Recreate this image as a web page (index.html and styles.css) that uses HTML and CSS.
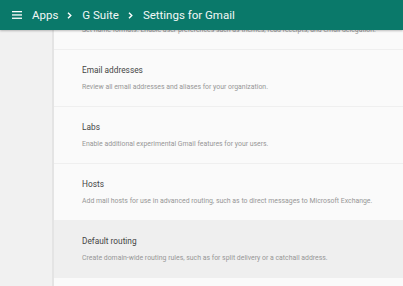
FILE: index.html
```html
<!DOCTYPE html>
<html>
<head>
<meta charset="utf-8">
<link rel="stylesheet" href="styles.css">
</head>
<body>
<div class="page">
  <header class="topbar">
    <svg class="menu" width="10" height="8" viewBox="0 0 10 8"><rect x="0" y="0" width="10" height="1.3" fill="#fff"/><rect x="0" y="3.3" width="10" height="1.3" fill="#fff"/><rect x="0" y="6.6" width="10" height="1.3" fill="#fff"/></svg>
    <span class="crumb">Apps</span>
    <svg class="sep" width="5" height="7" viewBox="0 0 5 7"><path d="M1 0.8 L3.8 3.5 L1 6.2" fill="none" stroke="#fff" stroke-width="1.4"/></svg>
    <span class="crumb">G Suite</span>
    <svg class="sep" width="5" height="7" viewBox="0 0 5 7"><path d="M1 0.8 L3.8 3.5 L1 6.2" fill="none" stroke="#fff" stroke-width="1.4"/></svg>
    <span class="crumb">Settings for Gmail</span>
  </header>
  <div class="body">
    <aside class="side"></aside>
    <main class="list">
      <div class="row first">
        <div class="title">User settings</div>
        <div class="desc">Set name formats. Enable user preferences such as themes, read receipts, and email delegation.</div>
      </div>
      <div class="row">
        <div class="title">Email addresses</div>
        <div class="desc">Review all email addresses and aliases for your organization.</div>
      </div>
      <div class="row">
        <div class="title">Labs</div>
        <div class="desc">Enable additional experimental Gmail features for your users.</div>
      </div>
      <div class="row">
        <div class="title">Hosts</div>
        <div class="desc">Add mail hosts for use in advanced routing, such as to direct messages to Microsoft Exchange.</div>
      </div>
      <div class="row hover">
        <div class="title">Default routing</div>
        <div class="desc">Create domain-wide routing rules, such as for split delivery or a catchall address.</div>
      </div>
      <div class="row">
        <div class="title">Advanced settings</div>
        <div class="desc">Configure advanced settings for Gmail.</div>
      </div>
    </main>
  </div>
</div>
</body>
</html>
```

FILE: styles.css
```css
html, body {
  margin: 0;
  padding: 0;
  width: 403px;
  height: 286px;
  overflow: hidden;
  font-family: Roboto, "Liberation Sans", sans-serif;
  background: #fafafa;
}
.page {
  display: flex;
  flex-direction: column;
  height: 286px;
  position: relative;
}
.topbar {
  height: 30px;
  flex: none;
  background: #0a796a;
  display: flex;
  align-items: center;
  padding-left: 12px;
  color: #fff;
  position: relative;
  z-index: 2;
  box-shadow: 0 1px 2px rgba(0,0,0,0.25);
}
.menu {
  margin-right: 10px;
}
.crumb {
  font-size: 11.5px;
  color: #f2f7f6;
}
.sep {
  margin: 0 10px 0 9px;
}
.body {
  flex: 1;
  display: flex;
  min-height: 0;
}
.side {
  width: 52px;
  flex: none;
  background: #f1f1f1;
  border-right: 2px solid #e4e4e4;
}
.list {
  flex: 1;
  overflow: hidden;
  background: #fafafa;
}
.row {
  height: 56px;
  border-bottom: 1px solid #efefef;
  padding-left: 28px;
  display: flex;
  flex-direction: column;
}
.row.first {
  margin-top: -37px;
}
.row.hover {
  background: #efefef;
}
.title {
  margin-top: 14px;
  font-size: 8.3px;
  line-height: 12px;
  color: #454545;
}
.desc {
  margin-top: 7px;
  font-size: 6.9px;
  line-height: 9px;
  color: #979797;
  white-space: nowrap;
}
```
